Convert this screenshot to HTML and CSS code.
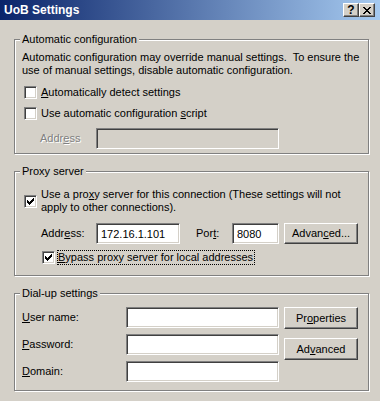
FILE: index.html
```html
<!DOCTYPE html>
<html>
<head>
<meta charset="utf-8">
<title>UoB Settings</title>
<link rel="stylesheet" href="styles.css">
</head>
<body>
<div class="window">
  <div class="titlebar">
    <span class="title">UoB Settings</span>
    <div class="tbtns">
      <span class="tbtn">?</span>
      <span class="tbtn"><svg width="8" height="7" viewBox="0 0 8 7" shape-rendering="crispEdges"><path fill="#000" d="M0 0h2v1h-2zM6 0h2v1h-2zM1 1h2v1h-2zM5 1h2v1h-2zM2 2h4v1h-4zM3 3h2v1h-2zM2 4h4v1h-4zM1 5h2v1h-2zM5 5h2v1h-2zM0 6h2v1h-2zM6 6h2v1h-2z"/></svg></span>
    </div>
  </div>
  <div class="content">
    <fieldset class="group g-auto">
      <legend>Automatic configuration</legend>
      <p class="desc">Automatic configuration may override manual settings.&nbsp; To ensure the<br>use of manual settings, disable automatic configuration.</p>
      <div class="check r-a1"><span class="box"></span><span><u>A</u>utomatically detect settings</span></div>
      <div class="check r-a2"><span class="box"></span><span>Use automatic configuration <u>s</u>cript</span></div>
      <div class="row r-a3">
        <span class="lbl disabled w56">Addr<u>e</u>ss</span>
        <input class="field off w183" type="text" value="" disabled>
      </div>
    </fieldset>

    <fieldset class="group g-proxy">
      <legend>Proxy server</legend>
      <div class="check r-p1"><span class="box"><svg width="7" height="7" viewBox="0 0 7 7" shape-rendering="crispEdges"><path fill="#000" d="M0 2h1v3h-1zM1 3h1v3h-1zM2 4h1v3h-1zM3 3h1v3h-1zM4 2h1v3h-1zM5 1h1v3h-1zM6 0h1v3h-1z"/></svg></span><span>Use a pro<u>x</u>y server for this connection (These settings will not<br>apply to other connections).</span></div>
      <div class="row r-p2">
        <span class="lbl w55">Addr<u>e</u>ss:</span>
        <input class="field w84" type="text" value="172.16.1.101">
        <span class="lbl port">Por<u>t</u>:</span>
        <input class="field w47" type="text" value="8080">
        <button class="btn adv" type="button">Advan<u>c</u>ed...</button>
      </div>
      <div class="check r-p3"><span class="box"><svg width="7" height="7" viewBox="0 0 7 7" shape-rendering="crispEdges"><path fill="#000" d="M0 2h1v3h-1zM1 3h1v3h-1zM2 4h1v3h-1zM3 3h1v3h-1zM4 2h1v3h-1zM5 1h1v3h-1zM6 0h1v3h-1z"/></svg></span><span class="focus"><u>B</u>ypass proxy server for local addresses</span></div>
    </fieldset>

    <fieldset class="group g-dial">
      <legend>Dial-up settings</legend>
      <div class="dial">
        <div class="dial-grid">
          <span class="lbl"><u>U</u>ser name:</span>
          <input class="field w153" type="text" value="">
          <span class="lbl"><u>P</u>assword:</span>
          <input class="field w153" type="password" value="">
          <span class="lbl"><u>D</u>omain:</span>
          <input class="field w153" type="text" value="">
        </div>
        <div class="dial-btns">
          <button class="btn tall" type="button">Pr<u>o</u>perties</button>
          <button class="btn tall" type="button">Ad<u>v</u>anced</button>
        </div>
      </div>
    </fieldset>
  </div>
</div>
</body>
</html>
```

FILE: styles.css
```css
* { box-sizing: border-box; }
html, body { margin: 0; padding: 0; }
body {
  background: #d4d0c8;
  font: 11px/13px "Liberation Sans", Arial, sans-serif;
  color: #000;
}
.window {
  width: 380px;
  height: 401px;
  background: #d4d0c8;
  overflow: hidden;
}
.titlebar {
  height: 20px;
  display: flex;
  align-items: center;
  padding: 0 5px 0 4px;
  background: linear-gradient(to right, #0a246a, #a6caf0);
}
.title {
  color: #fff;
  font-weight: bold;
  font-size: 12px;
  letter-spacing: 0;
}
.tbtns { margin-left: auto; display: flex; }
.tbtn {
  width: 16px;
  height: 14px;
  background: #d4d0c8;
  border: 1px solid;
  border-color: #fff #404040 #404040 #fff;
  box-shadow: inset -1px -1px 0 #808080;
  display: flex;
  align-items: center;
  justify-content: center;
  font-weight: bold;
  font-size: 12px;
  line-height: 12px;
}
.content { padding: 13px 11px 0 14px; }
.group {
  margin: 0;
  min-width: 0;
  border: 1px solid #808080;
  box-shadow: 1px 1px 0 #fff, inset 1px 1px 0 #fff;
  padding: 0 6px 0 7px;
}
.group legend {
  padding: 0 2px;
  margin-left: -2px;
  background: #d4d0c8;
  line-height: 13px;
}
.g-auto { padding-bottom: 4px; }
.g-proxy { margin-top: 11px; padding-bottom: 10px; }
.g-dial { margin-top: 11px; padding-bottom: 8px; }

.desc { margin: 5px 0 0; white-space: nowrap; }
.check {
  display: flex;
  align-items: center;
  padding-left: 2px;
  white-space: nowrap;
}
.box {
  width: 13px;
  height: 13px;
  flex: none;
  background: #fff;
  border: 1px solid;
  border-color: #808080 #fff #fff #808080;
  box-shadow: inset 1px 1px 0 #404040, inset -1px -1px 0 #d4d0c8;
  margin-right: 4px;
  display: flex;
  align-items: center;
  justify-content: center;
}
.box svg { display: block; }
.r-a1 { margin-top: 9px; }
.r-a2 { margin-top: 8px; }
.row { display: flex; align-items: center; height: 21px; white-space: nowrap; }
.r-a3 { margin-top: 8px; padding-left: 18px; }
.lbl { display: block; }
.w56 { width: 56px; }
.w55 { width: 55px; }
.disabled { color: #808080; text-shadow: 1px 1px 0 #fff; }

.field {
  height: 21px;
  margin: 0;
  padding: 0 4px;
  font: inherit;
  color: #000;
  background: #fff;
  border: 1px solid;
  border-color: #808080 #fff #fff #808080;
  box-shadow: inset 1px 1px 0 #404040, inset -1px -1px 0 #d4d0c8;
  outline: none;
  border-radius: 0;
}
.field.off { background: #d4d0c8; }
.w183 { width: 183px; }
.w84 { width: 84px; }
.w47 { width: 47px; }
.w153 { width: 153px; }

.r-p1 { margin-top: 10px; }
.r-p2 { margin-top: 9px; padding-left: 19px; }
.port { margin-left: 16px; width: 36px; }
.r-p3 { margin-top: 6px; padding-left: 20px; }
.r-p3 .box { margin-right: 2px; }
.focus { border: 1px dotted #000; padding: 0 1px 0 0; line-height: 13px; }

.btn {
  width: 74px;
  height: 21px;
  margin: 0;
  padding: 0;
  font: inherit;
  color: #000;
  background: #d4d0c8;
  border: 1px solid;
  border-color: #fff #404040 #404040 #fff;
  box-shadow: inset -1px -1px 0 #808080;
  border-radius: 0;
  display: flex;
  align-items: center;
  justify-content: center;
}
.adv { margin-left: 5px; }
.tall { height: 22px; }

.dial { display: flex; margin-top: 7px; }
.dial-grid {
  display: grid;
  grid-template-columns: 104px 153px;
  grid-auto-rows: 21px;
  row-gap: 6px;
  align-items: center;
}
.dial-btns {
  margin-left: 5px;
  display: flex;
  flex-direction: column;
  gap: 9px;
}
```
